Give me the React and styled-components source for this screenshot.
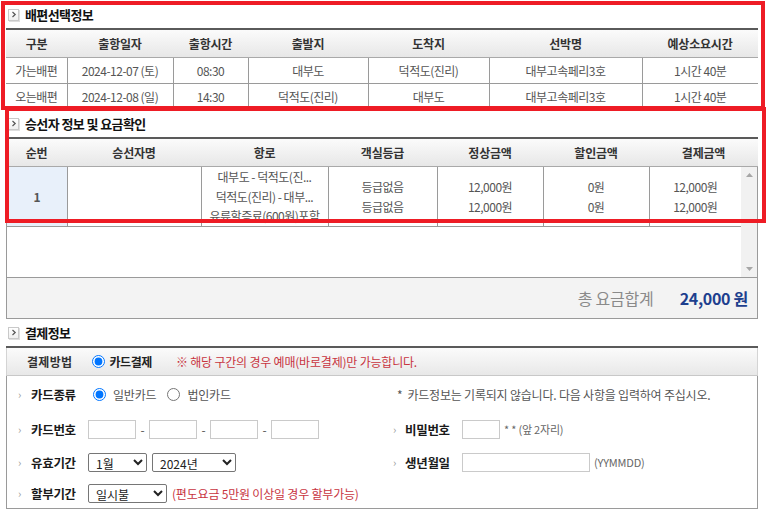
import React from 'react'
import styled, { createGlobalStyle } from 'styled-components'

const GlobalStyle = createGlobalStyle`
  html, body {
    margin: 0;
    padding: 0;
    background: #fff;
  }
  body {
    font-family: "Noto Sans CJK KR", "Noto Sans", sans-serif;
    font-size: 12px;
    color: #555;
  }
`

const Page = styled.div`
  position: relative;
  width: 752px;
  padding: 1px 14px 0 6px;
`

const SectionTitle = styled.div`
  display: flex;
  align-items: center;
  gap: 6px;
  height: 27px;
  padding-left: 2px;
  font-size: 13px;
  font-weight: 700;
  letter-spacing: -0.6px;
  color: #111;
`

const TitleIcon = styled.span`
  display: inline-flex;
  align-items: center;
  justify-content: center;
  width: 9px;
  height: 10px;
  border: 1px solid #c9c9c9;
  background: linear-gradient(#fff, #efefef);
  box-shadow: 1px 1px 0 #dedede;
`

const Table = styled.table`
  width: 100%;
  border-collapse: collapse;
  table-layout: fixed;
  border-top: ${p => (p.$top ? '2px solid #5a5a5a' : 'none')};
`

const Th = styled.th`
  height: 27px;
  padding: 0;
  background: linear-gradient(#fbfbfb, #e7e7e7);
  border-bottom: 1px solid #a9a9a9;
  font-weight: 700;
  font-size: 12px;
  letter-spacing: -0.2px;
  color: #333;
  text-align: center;
`

const Td = styled.td`
  height: ${p => p.$h || 25}px;
  padding: 0;
  border: 1px solid #9a9a9a;
  border-top: none;
  text-align: center;
  letter-spacing: -0.5px;
  line-height: ${p => p.$lh || 18}px;
  color: #555;
  background: ${p => (p.$tint ? '#e8f0fa' : '#fff')};
  font-weight: ${p => (p.$bold ? 700 : 400)};
  white-space: nowrap;
  overflow: hidden;
  &:first-child { border-left: none; }
  &:last-child { border-right: none; }
`

const ScrollBox = styled.div`
  display: flex;
  height: 110px;
  border-left: 1px solid #9a9a9a;
  border-right: 1px solid #9a9a9a;
`

const ScrollContent = styled.div`
  flex: 1;
  overflow: hidden;
`

const ScrollTrack = styled.div`
  width: 16px;
  background: #f1f1f1;
  display: flex;
  flex-direction: column;
  justify-content: space-between;
  align-items: center;
  padding: 6px 0;
`

const TotalBar = styled.div`
  display: flex;
  align-items: center;
  justify-content: flex-end;
  gap: 26px;
  height: 40px;
  padding-right: 9px;
  border: 1px solid #9a9a9a;
  background: #f3f3f3;
  font-size: 16px;
`

const TotalLabel = styled.span`
  color: #8a8a8a;
  letter-spacing: -0.2px;
`

const TotalValue = styled.span`
  color: #1d3f8e;
  font-weight: 700;
  letter-spacing: -0.3px;
`

const PayBox = styled.div`
  border-top: 2px solid #5a5a5a;
`

const PayHead = styled.div`
  display: flex;
  align-items: center;
  height: 27px;
  padding-left: 20px;
  background: linear-gradient(#fbfbfb, #e8e8e8);
  border-bottom: 1px solid #c8c8c8;
  border-left: 1px solid #d4d4d4;
  border-right: 1px solid #d4d4d4;
`

const HeadLabel = styled.span`
  font-weight: 700;
  color: ${p => p.$dark ? '#222' : '#333'};
  letter-spacing: ${p => p.$dark ? '-0.4px' : '0.3px'};
  margin-right: ${p => p.$gap || 0}px;
`

const Notice = styled.span`
  color: #c8343f;
  letter-spacing: -0.2px;
  font-size: ${p => p.$size || 12}px;
  margin-left: ${p => p.$ml || 0}px;
`

const PayBody = styled.div`
  display: grid;
  grid-template-columns: 386px 1fr;
  grid-template-rows: 36px 34px 32px 30px;
  border: 1px solid #9a9a9a;
  border-top: none;
`

const Row = styled.div`
  display: flex;
  align-items: center;
  padding-left: ${p => p.$pl || 0}px;
`

const Bullet = styled.span`
  width: ${p => p.$w || 13}px;
  color: #999;
  font-size: 11px;
`

const Label = styled.span`
  width: ${p => p.$w || 57}px;
  font-size: 12.5px;
  font-weight: 700;
  letter-spacing: -0.3px;
  color: #1a1a1a;
`

const Radio = styled.input.attrs({ type: 'radio' })`
  width: 13px;
  height: 13px;
  margin: 0 ${p => p.$mr || 6}px 0 ${p => p.$ml || 0}px;
`

const Plain = styled.span`
  color: ${p => p.$c || '#555'};
  font-size: ${p => p.$size || 12}px;
  letter-spacing: -0.2px;
  margin-left: ${p => p.$ml || 0}px;
`

const TextBox = styled.input.attrs({ type: 'text' })`
  box-sizing: border-box;
  width: ${p => p.$w || 48}px;
  height: 19px;
  margin: 0;
  border: 1px solid #cacaca;
  padding: 0 3px;
`

const Dash = styled.span`
  width: 13px;
  text-align: center;
  color: #555;
`

const Select = styled.select`
  box-sizing: border-box;
  width: ${p => p.$w}px;
  height: 19px;
  margin: 0 ${p => p.$mr || 0}px 0 0;
  padding: 0 0 0 3px;
  font-family: "Noto Sans CJK KR", sans-serif;
  font-size: 12px;
  color: #222;
  border: 1px solid #767676;
  border-radius: 2px;
  background: #fff;
`

const Marker = styled.div`
  position: absolute;
  left: ${p => p.$l}px;
  top: ${p => p.$t}px;
  width: ${p => p.$w}px;
  height: ${p => p.$h}px;
  box-sizing: border-box;
  border: 4.5px solid #ee1c25;
  pointer-events: none;
`

const Chevron = () => (
  <svg width="6" height="7" viewBox="0 0 6 7">
    <path d="M1.5 1 L4.2 3.5 L1.5 6" stroke="#555" strokeWidth="1.2" fill="none" />
  </svg>
)

const Arrow = ({ down }) => (
  <svg width="7" height="4" viewBox="0 0 7 4">
    <path d={down ? 'M0 0 L7 0 L3.5 4 Z' : 'M0 4 L7 4 L3.5 0 Z'} fill="#a6a6a6" />
  </svg>
)

const Title = ({ children }) => (
  <SectionTitle>
    <TitleIcon><Chevron /></TitleIcon>
    {children}
  </SectionTitle>
)

const trips = [
  ['가는배편', '2024-12-07 (토)', '08:30', '대부도', '덕적도(진리)', '대부고속페리3호', '1시간 40분'],
  ['오는배편', '2024-12-08 (일)', '14:30', '덕적도(진리)', '대부도', '대부고속페리3호', '1시간 40분'],
]

const tripCols = [61, 106, 75, 120, 121, 153, 116]
const fareCols = [61, 134, 127, 109, 106, 106, 109]
const fareBodyCols = [60, 134, 127, 109, 106, 106, 92]

const App = () => {
  return (
    <Page>
      <GlobalStyle />
      <Title>배편선택정보</Title>
      <Table $top>
        <colgroup>{tripCols.map((w, i) => <col key={i} style={{ width: w }} />)}</colgroup>
        <thead>
          <tr>
            {['구분', '출항일자', '출항시간', '출발지', '도착지', '선박명', '예상소요시간'].map(h => <Th key={h}>{h}</Th>)}
          </tr>
        </thead>
        <tbody>
          {trips.map(r => (
            <tr key={r[0]}>
              {r.map((c, i) => <Td key={i}>{c}</Td>)}
            </tr>
          ))}
        </tbody>
      </Table>

      <Title>승선자 정보 및 요금확인</Title>
      <Table $top>
        <colgroup>{fareCols.map((w, i) => <col key={i} style={{ width: w }} />)}</colgroup>
        <thead>
          <tr>
            {['순번', '승선자명', '항로', '객실등급', '정상금액', '할인금액', '결제금액'].map(h => <Th key={h}>{h}</Th>)}
          </tr>
        </thead>
      </Table>
      <ScrollBox>
        <ScrollContent>
          <Table>
            <colgroup>{fareBodyCols.map((w, i) => <col key={i} style={{ width: w }} />)}</colgroup>
            <tbody>
              <tr>
                <Td $h={59} $tint $bold>1</Td>
                <Td $h={59}></Td>
                <Td $h={59} $lh={19.5}>대부도 - 덕적도(진...<br />덕적도(진리) - 대부...<br />유류할증료(600원)포함</Td>
                <Td $h={59} $lh={20}>등급없음<br />등급없음</Td>
                <Td $h={59} $lh={20}>12,000원<br />12,000원</Td>
                <Td $h={59} $lh={20}>0원<br />0원</Td>
                <Td $h={59} $lh={20}>12,000원<br />12,000원</Td>
              </tr>
            </tbody>
          </Table>
        </ScrollContent>
        <ScrollTrack>
          <Arrow />
          <Arrow down />
        </ScrollTrack>
      </ScrollBox>
      <TotalBar>
        <TotalLabel>총 요금합계</TotalLabel>
        <TotalValue>24,000 원</TotalValue>
      </TotalBar>

      <Title>결제정보</Title>
      <PayBox>
        <PayHead>
          <HeadLabel $gap={20}>결제방법</HeadLabel>
          <Radio name="pay" defaultChecked $mr={4} />
          <HeadLabel $dark>카드결제</HeadLabel>
          <Notice $ml={24}>※ 해당 구간의 경우 예매(바로결제)만 가능합니다.</Notice>
        </PayHead>
        <PayBody>
          <Row $pl={11}>
            <Bullet>›</Bullet>
            <Label>카드종류</Label>
            <Radio name="kind" defaultChecked $ml={5} $mr={7} />
            <Plain>일반카드</Plain>
            <Radio name="kind" $ml={11} $mr={7} />
            <Plain>법인카드</Plain>
          </Row>
          <Row $pl={4}>
            <Plain $c="#555">*&nbsp; 카드정보는 기록되지 않습니다. 다음 사항을 입력하여 주십시오.</Plain>
          </Row>
          <Row $pl={11}>
            <Bullet>›</Bullet>
            <Label>카드번호</Label>
            <TextBox />
            <Dash>-</Dash>
            <TextBox />
            <Dash>-</Dash>
            <TextBox />
            <Dash>-</Dash>
            <TextBox />
          </Row>
          <Row>
            <Bullet $w={12}>›</Bullet>
            <Label $w={57}>비밀번호</Label>
            <TextBox $w={38} />
            <Plain $size={11} $c="#666" $ml={4}>* * (앞 2자리)</Plain>
          </Row>
          <Row $pl={11}>
            <Bullet>›</Bullet>
            <Label>유효기간</Label>
            <Select $w={59} $mr={5} defaultValue="1월">
              <option>1월</option>
            </Select>
            <Select $w={84} defaultValue="2024년">
              <option>2024년</option>
            </Select>
          </Row>
          <Row>
            <Bullet $w={12}>›</Bullet>
            <Label $w={57}>생년월일</Label>
            <TextBox $w={128} />
            <Plain $size={11} $c="#666" $ml={4}>(YYMMDD)</Plain>
          </Row>
          <Row $pl={11}>
            <Bullet>›</Bullet>
            <Label>할부기간</Label>
            <Select $w={79} defaultValue="일시불">
              <option>일시불</option>
            </Select>
            <Notice $ml={5}>(편도요금 5만원 이상일 경우 할부가능)</Notice>
          </Row>
          <Row />
        </PayBody>
      </PayBox>

      <Marker $l={1} $t={1} $w={764} $h={109} />
      <Marker $l={5} $t={107} $w={761} $h={116} />
    </Page>
  )
}

export default App
